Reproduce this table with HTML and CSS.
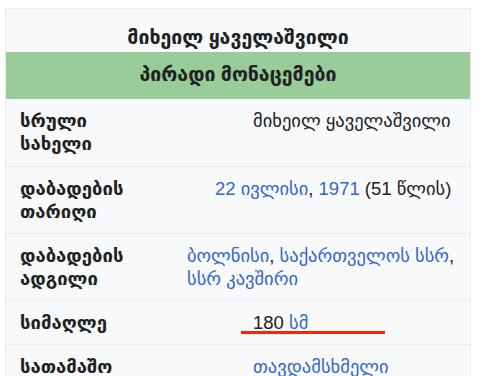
FILE: index.html
```html
<!DOCTYPE html>
<html lang="ka">
<head>
<meta charset="utf-8">
<title>მიხეილ ყაველაშვილი</title>
<link rel="stylesheet" href="styles.css">
</head>
<body>
<div class="infobox">
  <div class="infobox-title">მიხეილ ყაველაშვილი</div>
  <div class="infobox-header">პირადი მონაცემები</div>
  <div class="row row--name">
    <div class="label">სრული სახელი</div>
    <div class="value">მიხეილ ყაველაშვილი</div>
  </div>
  <div class="row row--date">
    <div class="label">დაბადების თარიღი</div>
    <div class="value"><a href="#">22 ივლისი</a>, <a href="#">1971</a> (51 წლის)</div>
  </div>
  <div class="row row--place">
    <div class="label">დაბადების ადგილი</div>
    <div class="value"><a href="#">ბოლნისი</a>, <a href="#">საქართველოს სსრ</a>, <a href="#">სსრ კავშირი</a></div>
  </div>
  <div class="row row--height">
    <div class="label">სიმაღლე</div>
    <div class="value">180 <a href="#">სმ</a><span class="mark"></span></div>
  </div>
  <div class="row row--position">
    <div class="label">სათამაშო</div>
    <div class="value"><a href="#">თავდამსხმელი</a></div>
  </div>
</div>
</body>
</html>
```
FILE: styles.css
```css
html, body {
  margin: 0;
  padding: 0;
  background: #ffffff;
}

body {
  padding: 8px 0 0 5px;
  font-family: "Liberation Sans", "DejaVu Sans", sans-serif;
  font-size: 18.5px;
  line-height: 23px;
  color: #202122;
}

.infobox {
  width: 464px;
  background: #f8f9fa;
  border: 1px solid #eaecf0;
  border-bottom: none;
}

.infobox-title {
  height: 23px;
  padding: 17px 10px 3px;
  text-align: center;
  font-weight: bold;
  font-size: 19.5px;
}

.infobox-header {
  height: 23px;
  background: #99cc99;
  padding: 11px 10px 13px;
  text-align: center;
  font-weight: bold;
  font-size: 19.5px;
}

.row {
  display: flex;
  padding: 10px 10px 10px 14px;
  border-top: 1px solid #eaecf0;
}

.row--name {
  border-top: none;
  padding-bottom: 11px;
}

.label {
  flex: none;
  width: 125px;
  font-weight: bold;
}

.value {
  flex: 1;
  position: relative;
}

.row--name .value,
.row--height .value,
.row--position .value {
  padding-left: 108px;
}

.row--date .value {
  padding-left: 70px;
}

.row--place .value {
  padding-left: 42px;
}

.value a {
  color: #3366cc;
  text-decoration: none;
}

.mark {
  position: absolute;
  left: 96px;
  top: 20px;
  width: 144px;
  height: 3px;
  background: #ff2200;
}
```
